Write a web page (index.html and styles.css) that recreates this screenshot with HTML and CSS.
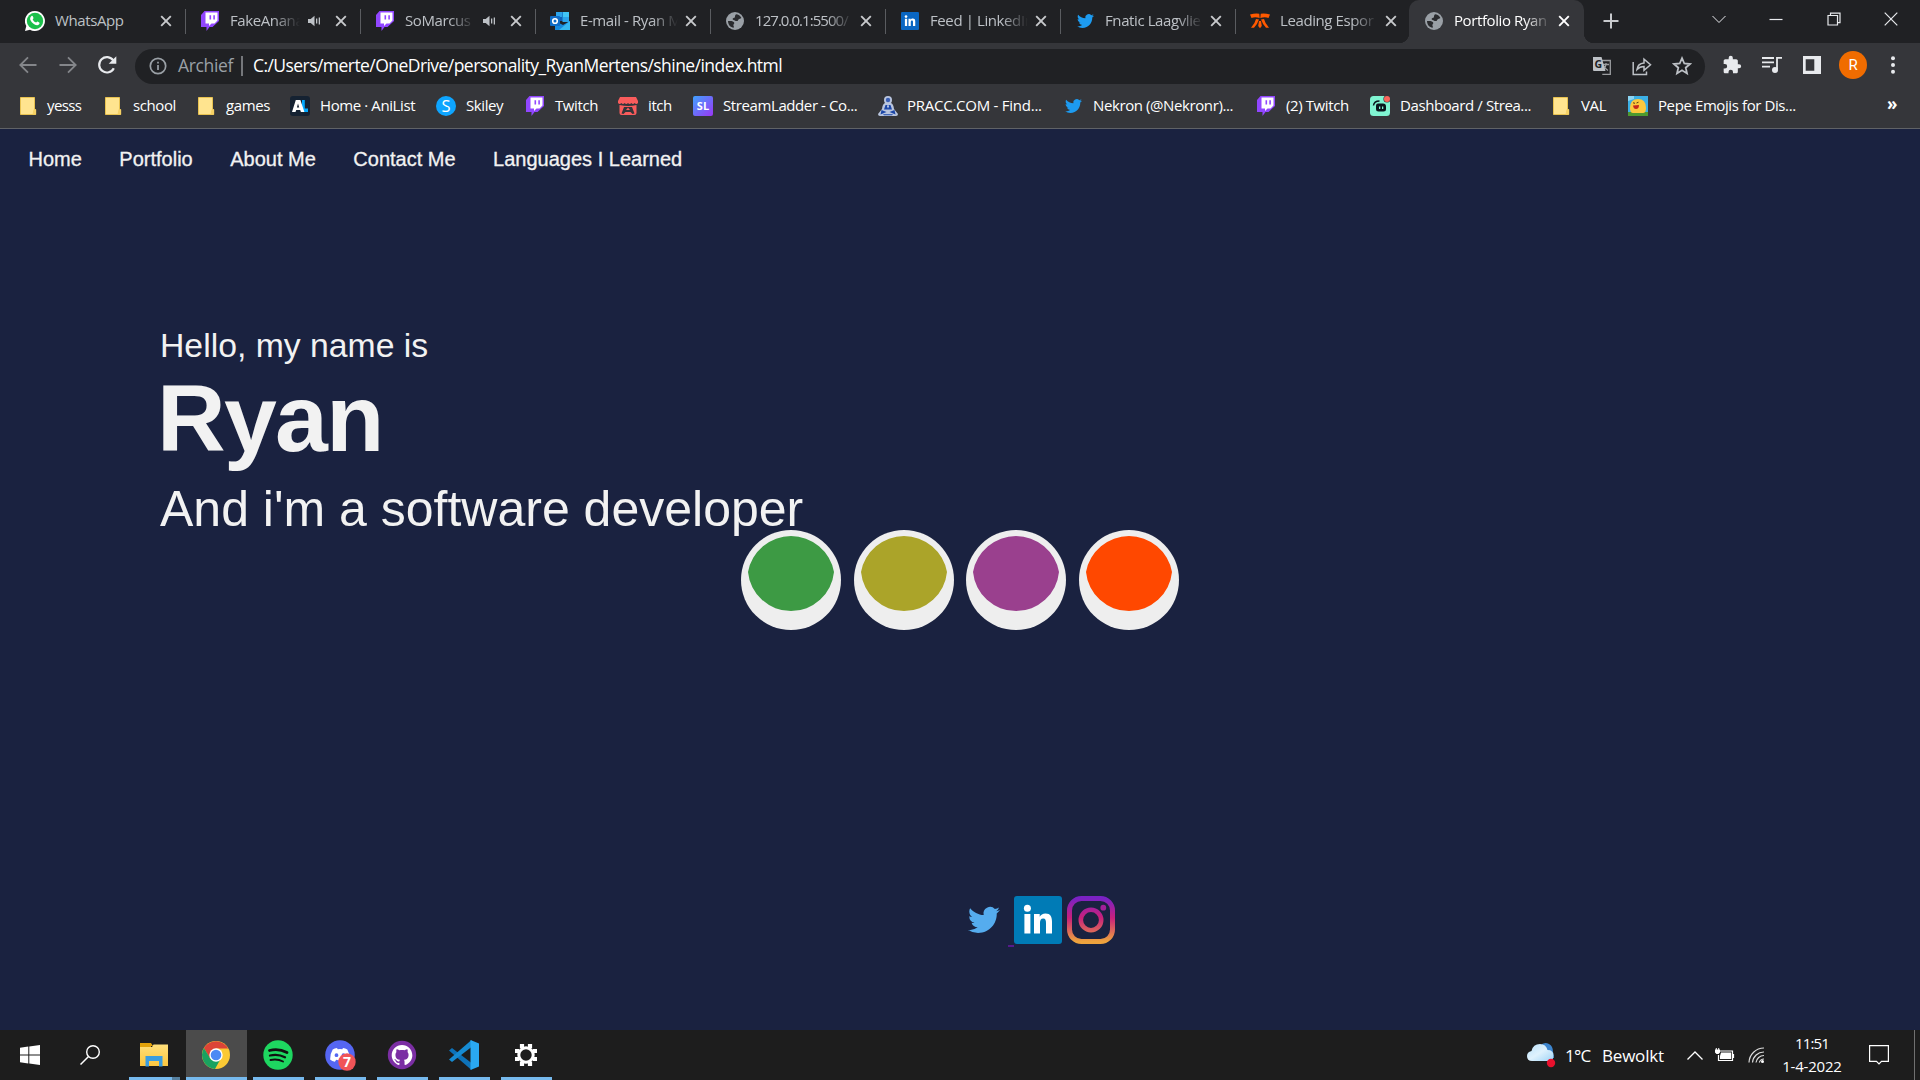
FILE: index.html
```html
<!DOCTYPE html>
<html lang="nl">
<head>
<meta charset="utf-8">
<title>Portfolio Ryan</title>
<link rel="stylesheet" href="styles.css">
</head>
<body>
<svg class="defs" aria-hidden="true">
  <defs>
    <linearGradient id="g-sl" x1="0" y1="0" x2="1" y2="1"><stop offset="0" stop-color="#3fa2ff"/><stop offset="1" stop-color="#9b36f5"/></linearGradient>
    <linearGradient id="g-insta" x1="0" y1="0" x2="0" y2="1"><stop offset="0" stop-color="#7a22c4"/><stop offset=".45" stop-color="#c8207c"/><stop offset="1" stop-color="#eea33d"/></linearGradient>
    <linearGradient id="g-insta-ring" gradientUnits="userSpaceOnUse" x1="0" y1="0" x2="0" y2="48"><stop offset="0" stop-color="#7a22c4"/><stop offset=".45" stop-color="#c8207c"/><stop offset="1" stop-color="#eea33d"/></linearGradient>
    <linearGradient id="g-cloud" x1="0" y1="0" x2="1" y2="1"><stop offset="0" stop-color="#b9e2fb"/><stop offset=".5" stop-color="#dff2fd"/><stop offset="1" stop-color="#9dd3f6"/></linearGradient>
    <linearGradient id="g-folder" x1="0" y1="0" x2="0" y2="1"><stop offset="0" stop-color="#ffdf7a"/><stop offset="1" stop-color="#fbc63e"/></linearGradient>
  </defs>
  <symbol id="twitter" viewBox="0 0 24 24"><path fill="currentColor" d="M23.953 4.57a10 10 0 01-2.825.775 4.958 4.958 0 002.163-2.723c-.951.555-2.005.959-3.127 1.184a4.92 4.92 0 00-8.384 4.482C7.69 8.095 4.067 6.13 1.64 3.162a4.822 4.822 0 00-.666 2.475c0 1.71.87 3.213 2.188 4.096a4.904 4.904 0 01-2.228-.616v.06a4.923 4.923 0 003.946 4.827 4.996 4.996 0 01-2.212.085 4.936 4.936 0 004.604 3.417 9.867 9.867 0 01-6.102 2.105c-.39 0-.779-.023-1.17-.067a13.995 13.995 0 007.557 2.209c9.053 0 13.998-7.496 13.998-13.985 0-.21 0-.42-.015-.63A9.935 9.935 0 0024 4.59z"/></symbol>
  <symbol id="twitch" viewBox="0 0 20 20"><path fill="#9146ff" d="M4.500 0H19v10l-6.500 6h-3L6.500 20v-4H1V4z"/><path fill="#fff" d="M5.500 1.500H17.500v8l-3 3h-3l-2.500 2.500v-2.500h-3.500z"/><path fill="#9146ff" d="M9.500 4.200h1.600v4.300H9.500zM13.300 4.200h1.600v4.300h-1.600z"/></symbol>
  <symbol id="folder" viewBox="0 0 20 20"><path fill="#ffe48f" stroke="#e8c250" d="M2.500 1.500h14v12h1.200v5H2.500z"/><path fill="#f6d165" d="M15.500 13.500h2.500v5h-3.500z"/></symbol>
  <symbol id="globe" viewBox="0 0 20 20"><circle cx="10" cy="10" r="9" fill="#9aa0a6"/><path fill="#2a2b2e" d="M11 3.200c2.200.2 4.500 1.500 5.400 3.800-1.200.8-2 .6-2.900 1.500-.8.800-.3 1.500-1.500 1.600-1.600.1-2.200-1-3.500-1.200-1.200-.1-1.200-1.500 0-1.800 1.400-.3 1.500-.9 1.500-1.800 0-.9.300-1.500 1-2.100zM3 10c2.300.1 4.900-.2 6 1.200.8 1.100-.3 1.800-.6 2.600-.3 1 .9 1.400.3 3C5.500 16.400 3 13.800 3 10z"/></symbol>
  <symbol id="x" viewBox="0 0 12 12"><path fill="none" stroke="currentColor" stroke-width="1.900" d="M1.200 1.200l9.600 9.600M10.800 1.200L1.200 10.800"/></symbol>
  <symbol id="sound" viewBox="0 0 14 14"><path fill="currentColor" d="M1 5h2.700L7.500 1.700v10.600L3.700 9H1zM9 4.500h1.300v5H9zM11.700 3.500H13v7h-1.300z"/></symbol>
  <symbol id="linkedin" viewBox="0 0 48 48"><rect width="48" height="48" rx="3" fill="currentColor"/><circle cx="13.400" cy="12.300" r="3.500" fill="#fff"/><path fill="#fff" d="M10.400 18h6v19.500h-6zM20 18h5.700v2.700c1-1.800 3-3.200 5.800-3.200 5 0 6.500 3.300 6.500 8.300v11.700h-6V27c0-2.700-.5-4.500-2.800-4.500-2.400 0-3.200 1.800-3.200 4.500v10.500h-6z"/></symbol>
</svg>

<header class="browser">
  <div class="tabs">
    <div class="tab"><svg class="fav" viewBox="0 0 20 20"><path fill="#fff" d="M10 0a10 10 0 11-5 18.700L0 20l1.300-5A10 10 0 0110 0z"/><circle cx="10" cy="10" r="8.200" fill="#1bc04b"/><path fill="#fff" d="M6.300 5.200c.7-.6 1.300-.4 1.600.3l.6 1.500c.1.500-.6 1-.8 1.400.8 1.500 1.800 2.500 3.400 3.200.5-.2.900-1.100 1.400-1l1.700.9c.7.300.3 1.600-.3 2.100-1.200 1-3 .6-4.700-.4-1.800-1.100-3.200-2.800-3.900-4.500-.4-1.400 0-2.700 1-3.500z"/></svg><span class="title">WhatsApp</span><svg class="close"><use href="#x"/></svg></div>
    <div class="tab"><svg class="fav"><use href="#twitch"/></svg><span class="title fade">FakeAnana</span><svg class="sound"><use href="#sound"/></svg><svg class="close"><use href="#x"/></svg></div>
    <div class="tab"><svg class="fav"><use href="#twitch"/></svg><span class="title fade">SoMarcus</span><svg class="sound"><use href="#sound"/></svg><svg class="close"><use href="#x"/></svg></div>
    <div class="tab"><svg class="fav" viewBox="0 0 20 20"><path fill="#0f5fb5" d="M6 1h13v9H6z"/><path fill="#2ba3ea" d="M6 1h6.500v5H6zM12.500 6H19v5h-6.500z"/><path fill="#41c5f5" d="M13 1h6v5h-6z"/><path fill="#1688dc" d="M5 10l8 4 7-4v9H5z"/><path fill="#35b8f1" d="M20 10v9L9 19z"/><rect y="5" width="10" height="10" rx="1" fill="#0f6cc6"/><circle cx="5" cy="10" r="2.300" fill="none" stroke="#fff" stroke-width="1.600"/></svg><span class="title fade">E-mail - Ryan M</span><svg class="close"><use href="#x"/></svg></div>
    <div class="tab"><svg class="fav"><use href="#globe"/></svg><span class="title fade ip">127.0.0.1:5500/</span><svg class="close"><use href="#x"/></svg></div>
    <div class="tab"><svg class="fav li"><use href="#linkedin"/></svg><span class="title fade">Feed | LinkedIn</span><svg class="close"><use href="#x"/></svg></div>
    <div class="tab"><svg class="fav tw"><use href="#twitter"/></svg><span class="title fade">Fnatic Laagvlie</span><svg class="close"><use href="#x"/></svg></div>
    <div class="tab"><svg class="fav" viewBox="0 0 20 20"><path fill="#ff5900" d="M0 3.500q5-1.500 9.300-.8l.4 4.300Q5 5.500 1.500 7zM20 3.500q-5-1.500-9.300-.8l-.4 4.300Q15 5.500 18.500 7zM6 8l3 .5Q7.500 13 4 16.800H1Q5 12.500 6 8zM14 8l-3 .5q1.500 4.500 5 8.300h3Q15 12.500 14 8zM9 10h2l.8 5-1.800 2.200L8.200 15z"/></svg><span class="title fade">Leading Espor</span><svg class="close"><use href="#x"/></svg></div>
    <div class="tab active"><svg class="fav"><use href="#globe"/></svg><span class="title fade">Portfolio Ryan</span><svg class="close"><use href="#x"/></svg></div>
    <svg class="plus" viewBox="0 0 16 16"><path stroke="#c8cacd" stroke-width="2" d="M8 .5v15M.5 8h15"/></svg>
    <div class="window">
      <svg viewBox="0 0 14 14"><path d="M.5 4L7 10.500 13.500 4"/></svg>
      <svg viewBox="0 0 14 14"><path stroke-width="1.200" d="M.5 7.500h13"/></svg>
      <svg viewBox="0 0 14 14"><path stroke-width="1.200" d="M1 3.500h9.500V13H1zM3.500 3.500v-2.300H13v9.500h-2.500"/></svg>
      <svg viewBox="0 0 14 14"><path stroke-width="1.200" d="M.7.700l12.600 12.600M13.300.7L.7 13.300"/></svg>
    </div>
  </div>

  <div class="toolbar">
    <svg class="nav-btn dim" viewBox="0 0 20 20"><path d="M18.500 10H2.500M10 2.300L2.300 10l7.700 7.700"/></svg>
    <svg class="nav-btn dim" viewBox="0 0 20 20"><path d="M1.500 10h16M10 2.300l7.700 7.700-7.700 7.700"/></svg>
    <svg class="nav-btn" viewBox="0 0 20 20"><path stroke-width="2.200" d="M16.800 13.200A7.700 7.700 0 1116.300 5.500"/><path fill="currentColor" stroke="none" d="M19.300 1.200v7.600h-7.600z"/></svg>
    <div class="omnibox">
      <svg class="info" viewBox="0 0 18 18"><circle cx="9" cy="9" r="7.700"/><path d="M9 8v5M9 4.800v1.800"/></svg>
      <span class="scheme">Archief</span><i class="bar"></i><span class="url">C:/Users/merte/OneDrive/personality_RyanMertens/shine/index.html</span>
      <div class="omni-actions">
        <svg viewBox="0 0 20 20"><path fill="none" stroke="#9b9da0" stroke-width="1.300" d="M10 4.500h8.300v13.800h-8M11 8.500h6M14 7v1.500c-.3 3-1.500 4.500-3 5.500M12 10c1 2.500 2.500 3.500 4 4.500"/><path fill="#bdc1c6" d="M1 1h8.500l4 14H2a1 1 0 01-1-1z"/><text x="2.500" y="11.500" class="g-letter">G</text></svg>
        <svg viewBox="0 0 20 20" class="line"><path d="M1.200 6v12.500h13.300v-3M5 13.500C5.500 9 8 7.300 12 7V3.200l6.500 5.600-6.500 5.500V10.500C9 10.500 7 11.300 5 13.500z"/></svg>
        <svg viewBox="0 0 20 20" class="line"><path stroke-width="1.800" d="M10 2.200l2.300 5.300 5.700.5-4.300 3.700L15 17.400 10 14.300 5 17.400l1.300-5.700L2 8l5.700-.5z"/></svg>
      </div>
    </div>
    <div class="tools">
      <svg viewBox="0 0 24 24"><path fill="currentColor" d="M20.500 11H19V7c0-1.100-.9-2-2-2h-4V3.500a2.500 2.500 0 00-5 0V5H4c-1.100 0-2 .9-2 2v3.800h1.500a2.700 2.700 0 010 5.400H2V20c0 1.100.9 2 2 2h3.800v-1.500a2.700 2.700 0 015.400 0V22H17c1.100 0 2-.9 2-2v-4h1.500a2.500 2.500 0 000-5z"/></svg>
      <svg viewBox="0 0 20 20"><path fill="none" stroke="currentColor" stroke-width="1.800" d="M0 3h12M0 7.300h12M0 11.600h8M15 14V2.900h5"/><circle cx="13" cy="15" r="3" fill="currentColor"/></svg>
      <svg viewBox="0 0 20 20"><path fill="currentColor" fill-rule="evenodd" d="M1 1h18v18H1zM3.700 4.200v11.600h8.600V4.200z"/></svg>
      <span class="avatar">R</span>
      <svg viewBox="0 0 20 20"><circle cx="10" cy="3.200" r="2"/><circle cx="10" cy="10" r="2"/><circle cx="10" cy="16.800" r="2"/></svg>
    </div>
  </div>

  <div class="bookmarks">
    <a><svg><use href="#folder"/></svg><span class="yesss">yesss</span></a>
    <a><svg><use href="#folder"/></svg><span>school</span></a>
    <a><svg><use href="#folder"/></svg><span>games</span></a>
    <a><svg viewBox="0 0 20 20"><rect width="20" height="20" rx="3" fill="#152232"/><path fill="#02a9ff" d="M12 4h2.800v8.500H18V16h-6z"/><path fill="#fff" fill-rule="evenodd" d="M5.800 4h4.600l4 12h-3.500l-.7-2H6.200l-.7 2H2zM8 7.500l-1.100 4h2.300z"/></svg><span>Home · AniList</span></a>
    <a><svg viewBox="0 0 20 20"><circle cx="10" cy="10" r="10" fill="#0ea5ff"/><text x="10" y="16" class="s-letter">S</text></svg><span>Skiley</span></a>
    <a><svg><use href="#twitch"/></svg><span>Twitch</span></a>
    <a><svg viewBox="0 0 20 20"><path fill="#fa5c5c" d="M2 1h16l2 4v2q-1.700 2-3.300 0-1.700 2-3.400 0-1.600 2-3.300 0-1.700 2-3.300 0-1.700 2-3.400 0Q1.700 9 0 7V5zM1.500 9q9 2 17 0v8q0 2-2 2h-13q-2 0-2-2z"/><path fill="#34363a" d="M6 11h8l2.500 6.500-2 .5-2-2h-5l-2 2-2-.5z"/><path fill="#fa5c5c" d="M10 11.500l2 2.500H8z"/></svg><span>itch</span></a>
    <a><svg viewBox="0 0 20 20"><rect width="20" height="20" rx="2" fill="url(#g-sl)"/><text x="10" y="14" class="sl-letter">SL</text></svg><span>StreamLadder - Co...</span></a>
    <a><svg viewBox="0 0 20 20"><circle cx="10" cy="4" r="4" fill="#b9c5de"/><path fill="#b9c5de" d="M7 7h6q2.500 1 3 6l4 5q0 2-2 2H2q-2 0-2-2l4-5q.5-5 3-6z"/><circle cx="10" cy="4" r="2.200" fill="#3a5fb5"/><path fill="#1c47a8" d="M7.500 9h5l1.500 4.500H6zM3.500 14l5 2-6 2.500zM16.500 14l-5 2 6 2.500zM5 18.300h10l-1 1H6z"/><path fill="#fff" d="M9 9.500h2l-1 3z"/></svg><span class="pracc">PRACC.COM - Find...</span></a>
    <a><svg class="tw"><use href="#twitter"/></svg><span>Nekron (@Nekronr)...</span></a>
    <a><svg><use href="#twitch"/></svg><span>(2) Twitch</span></a>
    <a><svg viewBox="0 0 20 20"><rect width="20" height="20" rx="3.500" fill="#80f5d2"/><path fill="#09161d" d="M6 9.500q0-2 2-2h5q3 0 3 3v2.500q0 2.500-2.500 2.500H8.500Q6 15.500 6 13z"/><path fill="none" stroke="#09161d" stroke-width="1.500" d="M3.500 9.500Q4 5 9.500 5"/><path fill="#80f5d2" d="M9 10.500h1.300v2.500H9zM12 10.500h1.300v2.500H12z"/><circle cx="17" cy="3" r="3.600" fill="#34363a"/><circle cx="17" cy="3" r="3" fill="#f9655b"/></svg><span>Dashboard / Strea...</span></a>
    <a><svg><use href="#folder"/></svg><span>VAL</span></a>
    <a><svg viewBox="0 0 20 20"><path fill="#3cb0e6" d="M0 0h20v20H0z"/><path fill="#8bd4f2" d="M0 0h6v3L0 5z"/><path fill="#4d9a2f" d="M0 16h20v4H0z"/><path fill="#fbc93d" d="M2 12Q2 3 10 3t8 9q0 5-3 5H5q-3 0-3-5z"/><path fill="#c4281c" d="M5 9.500l6-.5q0 4-3 4-2.500 0-3-3.500z"/><path fill="none" stroke="#573a12" d="M5 6.800l2 .5M10.500 6.200l-2 .8"/></svg><span>Pepe Emojis for Dis...</span></a>
    <b>»</b>
  </div>
</header>

<main class="site">
  <nav><a>Home</a><a>Portfolio</a><a>About Me</a><a>Contact Me</a><a>Languages I Learned</a></nav>
  <section class="hero">
    <p class="hello">Hello, my name is</p>
    <h1>Ryan</h1>
    <p class="role">And i'm a software developer</p>
  </section>
  <div class="swatches">
    <svg class="green" viewBox="0 0 100 100"><circle cx="50" cy="50" r="50"/><path d="M7 42A43.700 43.700 0 0193 42 43.200 43.200 0 017 42z"/></svg>
    <svg class="olive" viewBox="0 0 100 100"><circle cx="50" cy="50" r="50"/><path d="M7 42A43.700 43.700 0 0193 42 43.200 43.200 0 017 42z"/></svg>
    <svg class="purple" viewBox="0 0 100 100"><circle cx="50" cy="50" r="50"/><path d="M7 42A43.700 43.700 0 0193 42 43.200 43.200 0 017 42z"/></svg>
    <svg class="orange" viewBox="0 0 100 100"><circle cx="50" cy="50" r="50"/><path d="M7 42A43.700 43.700 0 0193 42 43.200 43.200 0 017 42z"/></svg>
  </div>
  <footer class="social">
    <a class="bird"><svg><use href="#twitter"/></svg></a><i class="gap-line"></i><svg class="in"><use href="#linkedin"/></svg>
    <svg class="insta" viewBox="0 0 48 48"><rect x="2.500" y="2.500" width="43" height="43" rx="12" fill="none" stroke="url(#g-insta)" stroke-width="5"/><circle cx="24" cy="24" r="10.200" fill="none" stroke="url(#g-insta-ring)" stroke-width="4.600"/><circle cx="36.300" cy="11.700" r="2.900" fill="#a3209a"/></svg>
  </footer>
</main>

<footer class="taskbar">
  <div class="start"><svg viewBox="0 0 20 20"><path fill="#fff" d="M0 2.800l8.300-1.200v7.900H0zM9.300 1.400L20 0v9.500H9.300zM0 10.500h8.300v7.900L0 17.200zM9.300 10.500H20V20L9.300 18.600z"/></svg></div>
  <div class="find"><svg viewBox="0 0 20 20"><circle cx="13" cy="7" r="6.300" fill="none" stroke="#fff" stroke-width="1.400"/><path stroke="#fff" stroke-width="1.500" d="M8.500 11.500L.5 19.500"/></svg></div>
  <div class="app explorer"><svg viewBox="0 0 30 30"><path fill="#e2a20a" d="M1 3h11l2 3h-2v4H1z"/><path fill="url(#g-folder)" d="M1 7h12l1.500-2.500H29V26H1z"/><path fill="#3a9de0" d="M6.500 16h17v10.500H20V21h-10v5.500H6.500z"/></svg></div>
  <div class="app chrome"><svg viewBox="0 0 30 30"><circle cx="15" cy="15" r="14" fill="#fbc934"/><path fill="#dc4437" d="M2.900 8A14 14 0 0127.100 8.500H15L9 18.500z"/><path fill="#1aa260" d="M2.900 8A14 14 0 0014 29l5-9-10-2z"/><circle cx="15" cy="15" r="6.700" fill="#fff"/><circle cx="15" cy="15" r="5.300" fill="#4a8af4"/></svg></div>
  <div class="app"><svg viewBox="0 0 30 30"><circle cx="15" cy="15" r="14.700" fill="#1ed760"/><path fill="none" stroke="#111" stroke-linecap="round" d="M6.500 10.500q9-2.500 17.500 2" stroke-width="2.800"/><path fill="none" stroke="#111" stroke-linecap="round" d="M7 15.500q8-2 15 1.800" stroke-width="2.300"/><path fill="none" stroke="#111" stroke-linecap="round" d="M7.500 20q7-1.500 12.500 1.500" stroke-width="1.900"/></svg></div>
  <div class="app"><svg class="discord" viewBox="0 0 30 30"><circle cx="15" cy="15" r="14.800" fill="#5566f2"/><path fill="#fff" fill-rule="evenodd" d="M12 8l.7 1.300q2.300-.4 4.600 0L18 8q2.300.3 4.300 1.500 2.800 4.500 2.600 10-2 1.700-4.800 2.300l-1.300-2q-3.800 1-7.600 0l-1.300 2q-2.800-.6-4.800-2.300-.2-5.500 2.600-10Q9.700 8.300 12 8zM11.500 13.300a1.900 1.900 0 100 3.800 1.900 1.900 0 000-3.800zM18.500 13.300a1.900 1.900 0 100 3.800 1.900 1.900 0 000-3.800z"/><circle cx="22" cy="22" r="8.700" fill="#f05458"/><text x="22" y="27" class="badge">7</text></svg></div>
  <div class="app"><svg viewBox="0 0 30 30"><circle cx="15" cy="15" r="14.200" fill="#7b2ea3"/><path transform="translate(4.700 4.700) scale(.86)" fill="#fff" d="M12 .297c-6.630 0-12 5.373-12 12 0 5.303 3.438 9.800 8.205 11.385.6.113.820-.258.820-.577 0-.285-.010-1.040-.015-2.040-3.338.724-4.042-1.610-4.042-1.610C4.422 18.070 3.633 17.700 3.633 17.700c-1.087-.744.084-.729.084-.729 1.205.084 1.838 1.236 1.838 1.236 1.070 1.835 2.809 1.305 3.495.998.108-.776.417-1.305.760-1.605-2.665-.3-5.466-1.332-5.466-5.930 0-1.310.465-2.380 1.235-3.220-.135-.303-.540-1.523.105-3.176 0 0 1.005-.322 3.300 1.230.960-.267 1.980-.399 3-.405 1.020.006 2.040.138 3 .405 2.280-1.552 3.285-1.230 3.285-1.230.645 1.653.240 2.873.120 3.176.765.840 1.230 1.910 1.230 3.220 0 4.610-2.805 5.625-5.475 5.920.420.360.810 1.096.810 2.220 0 1.606-.015 2.896-.015 3.286 0 .315.210.690.825.570C20.565 22.092 24 17.592 24 12.297c0-6.627-5.373-12-12-12"/></svg></div>
  <div class="app"><svg viewBox="0 0 30 30"><path fill="#0e72b8" d="M0 10.500l3-2.500 19.500 15v7z"/><path fill="#168bd2" d="M0 19.500l3 2.500L22.500 7V0z"/><path fill="#2aa9f2" d="M21.500 0L30 3.500v23L21.500 30z"/></svg></div>
  <div class="app"><svg viewBox="0 0 30 30"><g stroke="#fff" stroke-width="4.200"><path d="M11 4v4M19 4v4M11 22v4M19 22v4M4 11h4M4 19h4M22 11h4M22 19h4"/></g><circle cx="15" cy="15" r="7.200" fill="none" stroke="#fff" stroke-width="3"/></svg></div>
  <div class="tray">
    <svg class="weather" viewBox="0 0 30 30"><path fill="#3d86cf" d="M14 6q4-5 9-2 4 2 4 8l1 6h-8z"/><path fill="url(#g-cloud)" d="M6 21q-5 0-5-5 0-4 4.500-5Q7 4 14 4q6 0 7.500 6 6 0 6 5.500T22 21z"/><circle cx="25" cy="23" r="4.200" fill="#e8112d"/></svg>
    <span class="temp">1°C</span><span class="sky">Bewolkt</span>
    <svg class="chev" viewBox="0 0 16 9"><path d="M.5 8.500L8 1l7.500 7.500"/></svg>
    <svg class="batt" viewBox="0 0 20 14"><path fill="none" stroke="#fff" stroke-width="1.200" d="M5 3h12.500v9.500H3.500V7M18.500 6v4"/><path fill="#fff" d="M6 4.500h10.200V11H5V8zM0 1.500h5v3L3.500 6h-2L0 4.500zM.8 0h1v2h-1zM3.200 0h1v2h-1z"/></svg>
    <svg class="wifi" viewBox="0 0 16 16"><path d="M1 15.500A15 15 0 0116 1M4.500 15.500A11.300 11.300 0 0116 5M8 15.500A8 8 0 0116 8.500M11.300 15.500A5 5 0 0116 12"/><circle cx="14.500" cy="14.500" r="1.500" fill="#fff" stroke="none"/></svg>
    <div class="clock"><span class="time">11:51</span><span>1-4-2022</span></div>
    <svg class="note" viewBox="0 0 20 20"><path d="M.6.600h18.800v15.800H12.500L10 18.900 7.500 16.400H.6z"/></svg>
    <i class="peek"></i>
  </div>
</footer>
</body>
</html>
```
FILE: styles.css
```css
* { box-sizing: border-box; }
html, body { height: 100%; }
body {
  margin: 0;
  display: flex;
  flex-direction: column;
  overflow: hidden;
  background: #1a2240;
  font-family: "Open Sans", "Noto Sans", sans-serif;
  font-size: 15px;
  letter-spacing: -0.4px;
}
svg { display: block; flex: none; }
.defs { position: absolute; width: 0; height: 0; }

/* browser window */
.browser { height: 129px; background: #35363a; border-bottom: 1px solid #606266; }
.tabs { display: flex; height: 43px; padding-left: 11px; background: #202124; }
.tab {
  display: flex;
  align-items: center;
  width: 175px;
  padding: 0 13px 1px 14px;
  color: #bdc1c6;
  border-right: 1px solid transparent;
  background: linear-gradient(#5a5c60, #5a5c60) right 9px / 1px 25px no-repeat;
  background-origin: border-box;
}
.tab:nth-child(8) { width: 173px; padding-right: 11px; background: none; }
.tab.active {
  position: relative;
  width: 175px;
  padding-left: 15px;
  margin-right: 19px;
  background: #35363a;
  border-radius: 10px 10px 0 0;
  color: #fff;
}
.tab.active::before, .tab.active::after {
  content: "";
  position: absolute;
  bottom: 0;
  width: 10px;
  height: 10px;
}
.tab.active::before { left: -10px; background: radial-gradient(circle at 0 0, transparent 10px, #35363a 10.500px); }
.tab.active::after { right: -11px; background: radial-gradient(circle at 100% 0, transparent 10px, #35363a 10.500px); }
.fav { width: 20px; height: 20px; margin-right: 10px; }
.fav.li { width: 18px; height: 18px; margin: 0 11px 0 1px; color: #0a66c2; }
.tw { color: #1d9bf0; }
.fav.tw { width: 17px; margin: 0 11px 0 2px; }
.title { flex: 1; white-space: nowrap; line-height: 20px; margin-top: -2px; }
.fade {
  min-width: 0;
  margin-right: 7px;
  -webkit-mask-image: linear-gradient(90deg, #000 calc(100% - 26px), transparent);
  mask-image: linear-gradient(90deg, #000 calc(100% - 26px), transparent);
}
.ip { letter-spacing: -0.950px; }
.sound { width: 14px; height: 14px; margin-right: 14px; }
.close { width: 12px; height: 12px; color: #c8cacd; }
.active .close { color: #fff; }
.plus { width: 16px; height: 16px; margin-top: 13px; }
.window { display: flex; gap: 43.500px; margin: 12px 0 0 auto; padding-right: 22px; }
.window svg { width: 14px; height: 14px; fill: none; stroke: #e8eaed; }

.toolbar { display: flex; align-items: center; height: 45px; padding-left: 18px; color: #e8eaed; }
.nav-btn { width: 20px; height: 20px; margin: -1px 19.500px 0 0; fill: none; stroke: currentColor; stroke-width: 1.800; }
.nav-btn.dim { color: #84868a; }
.nav-btn:nth-child(3) { margin-right: 18px; }
.omnibox {
  display: flex;
  align-items: center;
  width: 1570px;
  height: 35px;
  margin-top: 1px;
  padding: 0 13px 0 14px;
  border-radius: 18px;
  background: #202124;
  font-size: 17.500px;
  letter-spacing: -0.550px;
}
.info { width: 18px; height: 18px; fill: none; stroke: #9aa0a6; stroke-width: 1.700; }
.scheme { margin: -2px 0 0 11px; color: #9aa0a6; letter-spacing: -0.360px; }
.bar { width: 2px; height: 20px; margin: 0 10px 0 8px; background: #75777b; }
.url { margin-top: -2px; color: #fff; }
.omni-actions { display: flex; gap: 20px; margin-left: auto; }
.omni-actions svg { width: 20px; height: 20px; }
.line { fill: none; stroke: #bdc1c6; stroke-width: 1.500; }
.g-letter { font: bold 10.500px "Open Sans", sans-serif; fill: #202124; }
.tools { display: flex; align-items: center; gap: 20px; margin: -1px 0 0 17px; }
.tools svg { width: 20px; height: 20px; fill: currentColor; }
.tools svg:last-child { margin-left: -4px; }
.avatar {
  width: 28px;
  height: 28px;
  margin-left: -3px;
  border-radius: 50%;
  background: #f06c00;
  color: #fff;
  font: 15px/28px Roboto, sans-serif;
  text-align: center;
}

.bookmarks {
  display: grid;
  grid-template-columns: 85px 93px 94px 146px 89px 93px 75px 185px 186px 192px 114px 181px 77px 257px auto;
  align-items: center;
  height: 36px;
  padding-left: 18px;
  color: #fff;
}
.bookmarks a { display: flex; align-items: center; white-space: nowrap; }
.bookmarks span { margin-top: -3px; }
.bookmarks .yesss { margin-left: -1px; letter-spacing: -0.600px; }
.bookmarks .pracc { margin-left: -1px; letter-spacing: -0.250px; }
.bookmarks svg { width: 20px; height: 20px; margin-right: 10px; }
.bookmarks .tw { width: 17px; margin: 0 11px 0 1px; }
.bookmarks b { font-size: 17px; line-height: 1; padding: 0 0 5px 2px; }
.s-letter { font: 16.500px "Open Sans", sans-serif; fill: #fff; text-anchor: middle; letter-spacing: 0; }
.sl-letter { font: bold 11px "Open Sans", sans-serif; fill: #fff; text-anchor: middle; letter-spacing: 0; }

/* portfolio page */
.site { flex: 1; font-family: "Liberation Sans", Arial, sans-serif; color: #f2f2f2; letter-spacing: 0; }
.site nav { display: flex; gap: 37.500px; padding: 18px 28.500px 0; font-size: 20px; line-height: 24px; -webkit-text-stroke: 0.300px #f2f2f2; }
.hero { margin-top: 155px; padding-left: 160px; }
.hero p, .hero h1 { margin: 0; }
.hello { font-size: 33.750px; line-height: 38px; }
.hero h1 { margin: 2px 0 0 -3px; font-size: 95px; line-height: 105px; letter-spacing: -1.700px; }
.hero .role { margin-top: 17px; font-size: 50px; line-height: 42px; }
.swatches { position: relative; display: flex; justify-content: center; gap: 12.600px; }
.swatches svg { width: 100px; height: 100px; }
.swatches circle { fill: #eee; }
.green path { fill: #3d9a44; }
.olive path { fill: #aba429; }
.purple path { fill: #9a408e; }
.orange path { fill: #ff4800; }
.social { display: flex; margin-top: 266px; padding-left: 960px; }
.bird { width: 48px; height: 48px; padding: 8px; color: #55acee; }
.bird svg { width: 32px; height: 32px; }
.gap-line { width: 6px; height: 51px; border-bottom: 2px solid #551a8b; }
.in { width: 48px; height: 48px; color: #007bb6; }
.insta { width: 48px; height: 48px; margin-left: 5px; }

/* taskbar */
.taskbar { display: flex; height: 50px; background: #1d1d1d; color: #fff; }
.start { padding: 15px 40px 0 20px; }
.find { padding: 15px 29px 0 0; }
.start svg, .find svg { width: 20px; height: 20px; }
.app { width: 51px; height: 50px; margin-right: 11px; padding: 10px 0 0 9.500px; border-bottom: 3px solid #76b9ed; }
.app svg { width: 30px; height: 30px; }
.explorer { margin-right: 6px; border-image: linear-gradient(90deg, #76b9ed 41px, #56809f 41px) 3; }
.chrome { width: 61px; margin-right: 6px; padding-left: 15px; background: #4b4b4b; }
.discord { overflow: visible; }
.badge { font: bold 14px "Open Sans", sans-serif; fill: #fff; text-anchor: middle; letter-spacing: 0; }
.tray { display: flex; align-items: center; margin-left: auto; font-size: 17px; }
.weather { width: 30px; height: 30px; margin-right: 9px; }
.temp { width: 37px; letter-spacing: -0.700px; }
.sky { width: 85px; letter-spacing: -0.200px; }
.chev { width: 16px; height: 9px; margin-right: 12px; fill: none; stroke: #fff; stroke-width: 1.300; }
.batt { width: 20px; height: 14px; margin: -1px 13px 0 0; }
.wifi { width: 16px; height: 16px; margin-right: 17px; fill: none; stroke: #ddd; stroke-width: 1.200; }
.clock { width: 62px; font-size: 15px; line-height: 23px; text-align: center; letter-spacing: -0.200px; }
.clock span { display: block; }
.clock .time { letter-spacing: -0.800px; }
.note { width: 20px; height: 20px; margin: 0 25px 0 26px; fill: none; stroke: #fff; stroke-width: 1.200; }
.peek { width: 1px; height: 50px; margin-right: 5px; background: #707070; }
```
